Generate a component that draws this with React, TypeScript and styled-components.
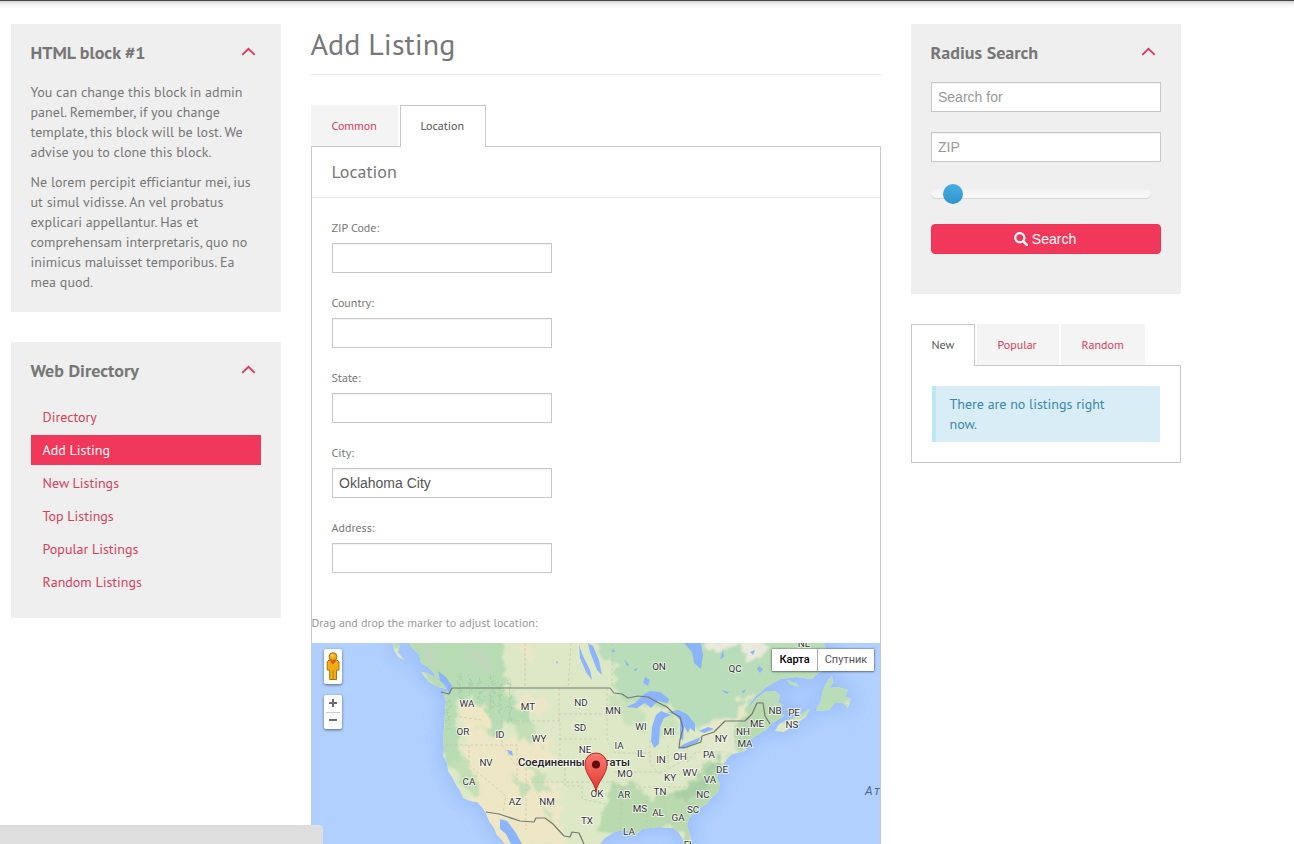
import React from "react";
import styled, { createGlobalStyle, css } from "styled-components";

const accent = "#f2385a";
const link = "#d8405c";
const line = "#c8c8c8";

const GlobalStyle = createGlobalStyle`
  *, *::before, *::after { box-sizing: border-box; }
  body {
    margin: 0;
    height: 844px;
    overflow: hidden;
    background: #fff;
    color: #777;
    font-family: "PT Sans", "Noto Sans", sans-serif;
    font-size: 14px;
    line-height: 20px;
  }
  h1, h2, h3, p, ul { margin: 0; padding: 0; font-weight: 400; }
  ul { list-style: none; }
  a { color: ${link}; text-decoration: none; }
`;

const Page = styled.div`
  position: relative;
  height: 844px;
  overflow: hidden;
`;

const TopEdge = styled.div`
  height: 24px;
  border-top: 1px solid #4a4749;
  background: linear-gradient(#d0d0d0, #f1f1f1 3px, #fff 7px);
`;

const Columns = styled.div`
  display: grid;
  grid-template-columns: 270px 570px 270px;
  column-gap: 30px;
  align-items: start;
  padding-left: 11px;
`;

const Side = styled.aside`
  display: grid;
  gap: 30px;
`;

const Block = styled.section<{ $h: number }>`
  height: ${(p) => p.$h}px;
  padding: 20px 20px 0;
  background: #efefef;
`;

const BlockHead = styled.header`
  display: flex;
  justify-content: space-between;
  height: 38px;
  padding-right: 5px;
  svg { margin-top: 2px; }
`;

const BlockTitle = styled.h2`
  margin-left: -0.5px;
  font-size: 18px;
  line-height: 18px;
  font-weight: 700;
  white-space: nowrap;
`;

const Paragraph = styled.p`
  margin: 0 0 10px -0.5px;
  white-space: nowrap;
  letter-spacing: 0.04px;
`;

const Menu = styled.ul`
  display: grid;
  gap: 3px;
  padding-top: 2px;
`;

const MenuItem = styled.li<{ $active?: boolean }>`
  height: 30px;
  padding-left: 11.5px;
  line-height: 30px;
  background: ${(p) => (p.$active ? accent : "transparent")};
  a { color: ${(p) => (p.$active ? "#fff" : link)}; }
`;

const Title = styled.h1`
  height: 51px;
  margin-left: -0.5px;
  border-bottom: 1px solid #e9e9e9;
  font-size: 30px;
  line-height: 40px;
`;

const Tabs = styled.nav`
  position: relative;
  display: flex;
  gap: 2px;
  height: 42px;
  margin-bottom: -1px;
`;

const Tab = styled.a<{ $w: number; $active?: boolean }>`
  width: ${(p) => p.$w}px;
  height: 41px;
  padding-left: 20.5px;
  font-size: 12px;
  line-height: 42px;
  background: #f4f4f4;
  white-space: nowrap;
  ${(p) =>
    p.$active &&
    css`
      height: 42px;
      padding-left: 19.5px;
      line-height: 40px;
      color: #555;
      background: #fff;
      border: 1px solid ${line};
      border-bottom: 0;
    `}
`;

const FormPanel = styled.section`
  height: 720px;
  border: 1px solid ${line};
`;

const PanelTitle = styled.h3`
  height: 51px;
  padding-left: 19.5px;
  border-bottom: 1px solid #e9e9e9;
  font-size: 18px;
  line-height: 50px;
`;

const Fields = styled.div`
  display: grid;
  gap: 25px;
  padding: 20px 20px 0;
`;

const Field = styled.label`
  display: grid;
  grid-template-rows: 20px 30px;
  font-size: 12px;
  line-height: 20px;
  text-indent: -0.5px;
`;

const Input = styled.input<{ $w: number }>`
  width: ${(p) => p.$w}px;
  height: 30px;
  margin: 0;
  padding: 0 6px;
  border: 1px solid ${line};
  border-radius: 0;
  outline: 0;
  background: #fff;
  box-shadow: inset 0 1px 1px rgba(0, 0, 0, 0.06);
  color: #555;
  font: 14px "Liberation Sans", Arial, sans-serif;
  text-indent: 0;
  &::placeholder { color: #999; opacity: 1; }
`;

const FieldBox = styled.div`
  padding-top: 5px;
  text-indent: 0;
`;

const Hint = styled.p`
  margin: 45px 0 0 -0.5px;
  color: #999;
  font-size: 12px;
  line-height: 20px;
  letter-spacing: -0.03px;
  white-space: nowrap;
`;

const MapBox = styled.div`
  position: relative;
  width: 569px;
  height: 201px;
  margin: 10px 0 0 -1px;
  font-family: Roboto, sans-serif;
  svg { display: block; }
`;

const MapControl = styled.div`
  position: absolute;
  left: 13px;
  width: 18px;
  border-radius: 2px;
  background: #fff;
  box-shadow: 0 1px 3px rgba(0, 0, 0, 0.5);
`;

const Pegman = styled(MapControl)`
  top: 6px;
  height: 35px;
`;

const Zoom = styled(MapControl)`
  top: 52px;
  height: 34px;
`;

const MapTypes = styled.div`
  position: absolute;
  top: 6px;
  right: 6px;
  display: flex;
  height: 22px;
  font-size: 11px;
  line-height: 21px;
  color: #565656;
  background: #fff;
  box-shadow: 0 0 2px rgba(0, 0, 0, 0.6), 0 1px 2px rgba(0, 0, 0, 0.3);
`;

const MapType = styled.span<{ $w: number; $on?: boolean }>`
  width: ${(p) => p.$w}px;
  text-align: center;
  ${(p) =>
    p.$on &&
    css`
      border-right: 1px solid #aaa;
      color: #000;
      font-weight: 500;
    `}
`;

const SearchForm = styled.form`
  display: grid;
  gap: 20px;
`;

const Slider = styled.div`
  display: flex;
  align-items: center;
  height: 22px;
  margin-top: 1px;
`;

const Track = styled.div`
  display: flex;
  align-items: center;
  width: 220px;
  height: 10px;
  border-radius: 5px;
  padding-left: 12px;
  background: linear-gradient(#f3f3f3, #f9f9f9);
  box-shadow: inset 0 -1px 0 rgba(0, 0, 0, 0.14);
`;

const Knob = styled.span`
  width: 20px;
  height: 20px;
  border-radius: 50%;
  background: linear-gradient(#47aee0, #2f94cf);
`;

const SearchButton = styled.button`
  display: flex;
  align-items: center;
  justify-content: center;
  gap: 4px;
  height: 30px;
  margin-top: -1px;
  padding: 0 2px 0 0;
  border: 1px solid #ee3455;
  border-radius: 4px;
  background: ${accent};
  color: #fff;
  font: 14px "Liberation Sans", Arial, sans-serif;
`;

const ListingPanel = styled.div`
  height: 98px;
  padding: 20px;
  border: 1px solid ${line};
`;

const Notice = styled.div`
  height: 56px;
  padding: 8px 35px 8px 13.5px;
  border-left: 4px solid #bce8f1;
  background: #d9edf7;
  color: #3a87ad;
  white-space: nowrap;
`;

const StatusBar = styled.div`
  position: absolute;
  left: 0;
  bottom: 0;
  width: 323px;
  height: 19px;
  border-top-right-radius: 3px;
  background: #dedede;
`;

const Chevron = () => (
  <svg width="15" height="12" viewBox="0 0 15 12" fill="none">
    <path d="M1.3 8.8 7.5 2.8 13.7 8.8" stroke="#e2385a" strokeWidth="1.8" />
  </svg>
);

const SearchIcon = () => (
  <svg width="14" height="14" viewBox="0 0 14 14" fill="none" stroke="#fff">
    <circle cx="5.8" cy="5.8" r="4.6" strokeWidth="2.2" />
    <path d="M9.3 9.3 12.8 12.8" strokeWidth="2.6" strokeLinecap="round" />
  </svg>
);

const labels: [string, number, number][] = [
  ["WA", 467, 703], ["OR", 463, 731], ["ID", 500, 734], ["MT", 528, 706], ["ND", 581, 702],
  ["MN", 613, 710], ["SD", 580, 727], ["WY", 539, 738], ["NV", 486, 762], ["CA", 469, 781],
  ["AZ", 515, 801], ["NM", 547, 801], ["NE", 585, 749], ["IA", 619, 745], ["WI", 641, 726],
  ["MI", 669, 731], ["IL", 641, 753], ["IN", 661, 759], ["OH", 680, 756], ["MO", 625, 773],
  ["KY", 670, 777], ["WV", 690, 772], ["OK", 597, 793], ["AR", 624, 794], ["TN", 660, 791],
  ["MS", 640, 808], ["AL", 658, 812], ["GA", 678, 817], ["SC", 693, 809], ["TX", 587, 820],
  ["LA", 629, 831], ["FL", 689, 844], ["NC", 703, 794], ["VA", 710, 779], ["DE", 722, 769],
  ["PA", 709, 754], ["NY", 721, 738], ["MA", 745, 743], ["NH", 743, 731], ["ME", 757, 723],
  ["NB", 775, 710], ["PE", 794, 712], ["NS", 792, 724], ["ON", 659, 666], ["QC", 735, 668],
  ["NL", 804, 643.5],
];

const land =
  "M409 643 413 649 419 654 421 663 428 667 434 673 436 678 442 680 446 684 450 688 452 696 448 691 443 693 446 701 445 713 444 726 443 742 444 748 443 756 447 763 448 771 453 779 456 785 460 791 463 798 470 801 477 802 482 807 486 813 489 821 494 828 497 835 501 839 505 844 600 844 605 838 613 833 621 830 627 831 632 835 638 833 642 829 650 828 659 827 666 828 673 828 678 832 682 838 684 844 692 844 690 834 687 826 689 818 695 812 701 807 707 804 711 798 718 792 720 784 717 778 720 768 724 764 728 758 732 754 741 752 747 750 743 746 751 739 757 735 766 730 771 724 779 719 784 716 779 710 783 705 778 702 780 695 775 691 765 692 757 698 751 705 747 708 755 697 765 688 780 679 796 677 812 679 818 673 827 670 833 664 833 655 826 649 824 643Z";

const Land = () => (
  <>
    <path d={land} />
    <path d="M421 672 427 673 435 677 443 684 446 689 438 687 429 682Z M393 643 400 645 398 652 404 660 398 657 394 650Z" />
    <path d="M816 711 821 700 823 690 828 680 832 676 833 683 829 688 838 687 848 690 845 697 851 699 848 708 843 703 835 703 829 710Z M787 680 797 684 799 687 790 684Z" />
    <path d="M775 731 779 724 788 720 796 717 804 712 810 709 806 717 794 725 784 732Z M785 708 795 710 802 711 793 714Z" />
  </>
);

const USMap = () => (
  <svg width="569" height="201" viewBox="311 643 569 201">
    <defs>
      <filter id="shelf" x="-20%" y="-20%" width="140%" height="140%">
        <feGaussianBlur stdDeviation="9" />
      </filter>
      <filter id="terrain" x="-10%" y="-10%" width="120%" height="120%">
        <feTurbulence type="fractalNoise" baseFrequency="0.09" numOctaves="3" seed="4" result="n" />
        <feDisplacementMap in="SourceGraphic" in2="n" scale="18" xChannelSelector="R" yChannelSelector="G" />
        <feGaussianBlur stdDeviation="0.9" />
      </filter>
      <filter id="speckle">
        <feTurbulence type="fractalNoise" baseFrequency="0.3" numOctaves="2" seed="9" result="n" />
        <feDisplacementMap in="SourceGraphic" in2="n" scale="14" xChannelSelector="R" yChannelSelector="G" />
      </filter>
      <clipPath id="landClip"><Land /></clipPath>
      <linearGradient id="pin" x1="0" y1="0" x2="0" y2="1">
        <stop offset="0" stopColor="#fc7a70" />
        <stop offset="1" stopColor="#e0362d" />
      </linearGradient>
    </defs>
    <rect x="311" y="643" width="569" height="201" fill="#b1d0ff" />
    <g filter="url(#shelf)" fill="#8fb4f7" stroke="#8fb4f7" strokeWidth="8" opacity="0.65"><Land /></g>
    <g fill="#dde8c6"><Land /></g>
    <g clipPath="url(#landClip)">
      <g filter="url(#terrain)">
        <path fill="#b7dcb3" d="M380 630H495L505 655 506 690 516 705 530 718 530 730 515 728 505 720 494 738 484 720 470 698 455 705 458 735 462 760 452 768 440 745 440 690Z" />
        <path fill="#eee7c6" d="M462 702 482 703 492 722 480 735 515 740 550 735 556 755 530 770 560 790 565 844 490 844 470 800 478 780 466 760 468 738 460 720Z" />
        <path fill="#ebe7c6" d="M515 700 550 695 553 708 530 716Z M520 643 540 650 528 662Z" />
        <path fill="#c4dfb5" d="M460 755 474 770 482 790 476 797 460 782 448 764Z M530 765 548 775 546 795 534 785Z M518 718 536 735 530 744 518 735Z M476 725 496 728 490 738Z M545 745 550 752 543 752Z M512 775 532 790 524 798Z M540 800 556 815 550 825Z" />
        <path fill="#b9ddb8" d="M593 630H850V720H770L735 725 708 740 690 720 662 705 630 705 612 690 622 665 600 655Z" />
        <path fill="#cae2bb" d="M605 692 640 705 650 735 634 728 615 712Z M660 712 678 715 675 735 662 738Z" />
        <path fill="#b9d9ae" d="M612 785 632 780 650 800 690 786 722 745 740 715 765 700 780 720 750 745 730 760 725 785 700 815 690 844 672 825 625 838 600 830Z" />
        <path fill="#e0e9cb" d="M704 727 738 722 735 755 718 765 692 760 700 748Z" />
        <path fill="#e9e9dc" d="M700 636H754L768 650 752 660 738 648 705 645Z M775 645 795 650 788 660Z" />
        <path fill="#e5e8c9" d="M690 737 705 725 740 710 752 702 744 715 718 730Z M735 700 755 693 748 703Z" />
        <path fill="#a9d0a4" d="M675 797 700 779 718 755 722 762 704 790 684 802Z" />
      </g>
      <g filter="url(#speckle)" fill="none" stroke="#cbcfc6" strokeWidth="3" strokeDasharray="3 2" opacity="0.9">
        <path d="M420 645 426 652 432 662 446 670M428 648 434 664M464 648 476 652 490 664M468 656 480 664 490 672M472 650 486 660" />
      </g>
      <g filter="url(#speckle)" fill="none" stroke="#9ac99b" strokeWidth="1.6" opacity="0.6">
        <path d="M460 674V700M470 676V696M480 678V702M492 676V708M500 684V714M448 700V730M510 680V720" />
      </g>
    </g>
    <g fill="#8cb4fb">
      <path d="M626 707 635 703 643 695 650 691 660 692 669 699 668 703 658 701 651 708 645 703 637 708Z" />
      <path d="M656 715 661 711 671 715 664 718 660 727 659 744 654 748 651 741 652 727Z" />
      <path d="M668 712 678 710 687 714 695 724 695 732 690 728 688 733 684 726 683 741 680 737 680 720 675 715Z" />
      <path d="M678 748 684 744 701 737 698 742 684 749Z M699 731 708 727 714 729 704 733Z" />
      <path d="M684 643H701L703 655 701 669 694 663 692 652Z M588 643 593 646 599 660 602 675 597 670 590 652Z M579 645 583 656 590 670 592 680 586 672 580 658Z" />
      <path d="M500 819 507 821 516 833 522 844H511L506 834 500 829Z M507 750 512 751 513 756 509 754Z M645 677 650 680 648 686 643 683Z M438 671 446 677 452 686 449 694 447 686 440 680Z M759 666 763 669 760 673 757 669Z" />
      <path d="M611 652 614 649 615 652Z M721 690 729 692 727 694Z M720 659 723 650 724 657Z M741 692 746 689 744 693Z M556 661 558 662 557 664Z M633 670 638 668 636 671Z M624 659 629 665 627 666Z M750 652 755 650 753 655Z" />
    </g>
    <g fill="none" stroke="#c0c4ac" strokeWidth="0.8" strokeDasharray="3 2" opacity="0.8">
      <path d="M525 643V688M571 643 568 689M612 643V688M559 688V721M559 714H607M559 739H600M517 721 560 721V763M445 745H517V787M502 715V745L515 765M469 745V765L506 796 503 812M527 763H628M526 782H612M526 763V830M565 763V786H582V799L606 804M607 688V740L615 753H650M614 772H663L690 757M613 787H716M622 787 620 829M647 795V829M664 795 668 829M650 740V763L660 775M668 745V770M687 747V762L696 752H724M490 690V718M454 716 482 720M682 795 702 818M500 706 520 725M735 725V745M745 718 747 740" />
    </g>
    <g fill="none" stroke="#737970" strokeWidth="1.2" strokeLinejoin="round">
      <path d="M441 692 449 694 452 688H610L614 693 622 694 628 698 638 696 648 697 657 702 667 707 673 713 680 717 683 728 680 740 679 748 687 747 701 742 702 736 714 732 725 721 745 721 752 714 757 703 763 703 765 716 770 724" />
      <path d="M486 812 499 814 520 821 534 822 536 818 545 818 553 824 564 836 570 837 572 832 579 833 584 844" />
    </g>
    <g fontFamily="Roboto, sans-serif" fill="#333" stroke="#fff" strokeOpacity="0.7" strokeWidth="2" strokeLinejoin="round" textAnchor="middle" paintOrder="stroke">
      {labels.map(([t, x, y]) => (
        <text key={t} x={x} y={y + 3.6} fontSize="9.8">{t}</text>
      ))}
      <text x="574" y="766" fontSize="11.3" fontWeight="500" fill="#222" textLength="112" lengthAdjust="spacingAndGlyphs">Соединенные Штаты</text>
    </g>
    <text x="865" y="795" fontFamily="Roboto, sans-serif" fontSize="12" fontStyle="italic" fill="#4a6490" letterSpacing="2">Ат</text>
    <path d="M596 792C595 782 585 775 585 764A11 11 0 0 1 607 764C607 775 597 782 596 792Z" fill="url(#pin)" stroke="#b92b25" strokeWidth="1" />
    <circle cx="596" cy="764.5" r="4" fill="#5c0f0b" />
  </svg>
);

const PegmanIcon = () => (
  <svg width="18" height="35" viewBox="0 0 18 35">
    <g fill="#f5ad12" stroke="#a8700e" strokeWidth="1">
      <path d="M5 11H13L15 13V21H12.5V30.5H5.7V21H3.2V13Z" />
      <circle cx="9" cy="7.6" r="3.9" />
    </g>
    <path d="M5.6 11.5H12.4L9 15.5Z" fill="#e2552b" />
    <path d="M9.1 21V30" stroke="#bd7d0d" />
    <circle cx="8.2" cy="6.6" r="1.4" fill="#ffd362" />
  </svg>
);

const ZoomIcon = () => (
  <svg width="18" height="34" viewBox="0 0 18 34" stroke="#6c6c6c" strokeWidth="2">
    <path d="M5 8H13M9 4V12M5 25H13" />
    <path d="M2 17.5H16" stroke="#ccc" strokeWidth="1" />
  </svg>
);

const menu = ["Directory", "Add Listing", "New Listings", "Top Listings", "Popular Listings", "Random Listings"];
const fields = [["ZIP Code:", ""], ["Country:", ""], ["State:", ""], ["City:", "Oklahoma City"], ["Address:", ""]];

const Center = styled.main``;

const FormTabs = styled.div`
  padding-top: 30px;
`;

export default function App() {
  return (
    <Page>
      <GlobalStyle />
      <TopEdge />
      <Columns>
        <Side>
          <Block $h={288}>
            <BlockHead>
              <BlockTitle>HTML block #1</BlockTitle>
              <Chevron />
            </BlockHead>
            <Paragraph>
              You can change this block in admin<br />panel. Remember, if you change<br />
              template, this block will be lost. We<br />advise you to clone this block.
            </Paragraph>
            <Paragraph>
              Ne lorem percipit efficiantur mei, ius<br />ut simul vidisse. An vel probatus<br />
              explicari appellantur. Has et<br />comprehensam interpretaris, quo no<br />
              inimicus maluisset temporibus. Ea<br />mea quod.
            </Paragraph>
          </Block>
          <Block $h={276}>
            <BlockHead>
              <BlockTitle>Web Directory</BlockTitle>
              <Chevron />
            </BlockHead>
            <Menu>
              {menu.map((m) => (
                <MenuItem key={m} $active={m === "Add Listing"}><a>{m}</a></MenuItem>
              ))}
            </Menu>
          </Block>
        </Side>
        <Center>
          <Title>Add Listing</Title>
          <FormTabs>
            <Tabs>
              <Tab $w={87}>Common</Tab>
              <Tab $w={86} $active>Location</Tab>
            </Tabs>
            <FormPanel>
              <PanelTitle>Location</PanelTitle>
              <Fields>
                {fields.map(([name, value]) => (
                  <Field key={name}>
                    {name}
                    <FieldBox><Input $w={220} defaultValue={value} /></FieldBox>
                  </Field>
                ))}
              </Fields>
              <Hint>Drag and drop the marker to adjust location:</Hint>
              <MapBox>
                <USMap />
                <Pegman><PegmanIcon /></Pegman>
                <Zoom><ZoomIcon /></Zoom>
                <MapTypes>
                  <MapType $w={46} $on>Карта</MapType>
                  <MapType $w={56}>Спутник</MapType>
                </MapTypes>
              </MapBox>
            </FormPanel>
          </FormTabs>
        </Center>
        <Side>
          <Block $h={270}>
            <BlockHead>
              <BlockTitle>Radius Search</BlockTitle>
              <Chevron />
            </BlockHead>
            <SearchForm>
              <Input $w={230} placeholder="Search for" />
              <Input $w={230} placeholder="ZIP" />
              <Slider><Track><Knob /></Track></Slider>
              <SearchButton type="button"><SearchIcon />Search</SearchButton>
            </SearchForm>
          </Block>
          <div>
            <Tabs>
              <Tab $w={64} $active>New</Tab>
              <Tab $w={82}>Popular</Tab>
              <Tab $w={84}>Random</Tab>
            </Tabs>
            <ListingPanel>
              <Notice>There are no listings right<br />now.</Notice>
            </ListingPanel>
          </div>
        </Side>
      </Columns>
      <StatusBar />
    </Page>
  );
}
